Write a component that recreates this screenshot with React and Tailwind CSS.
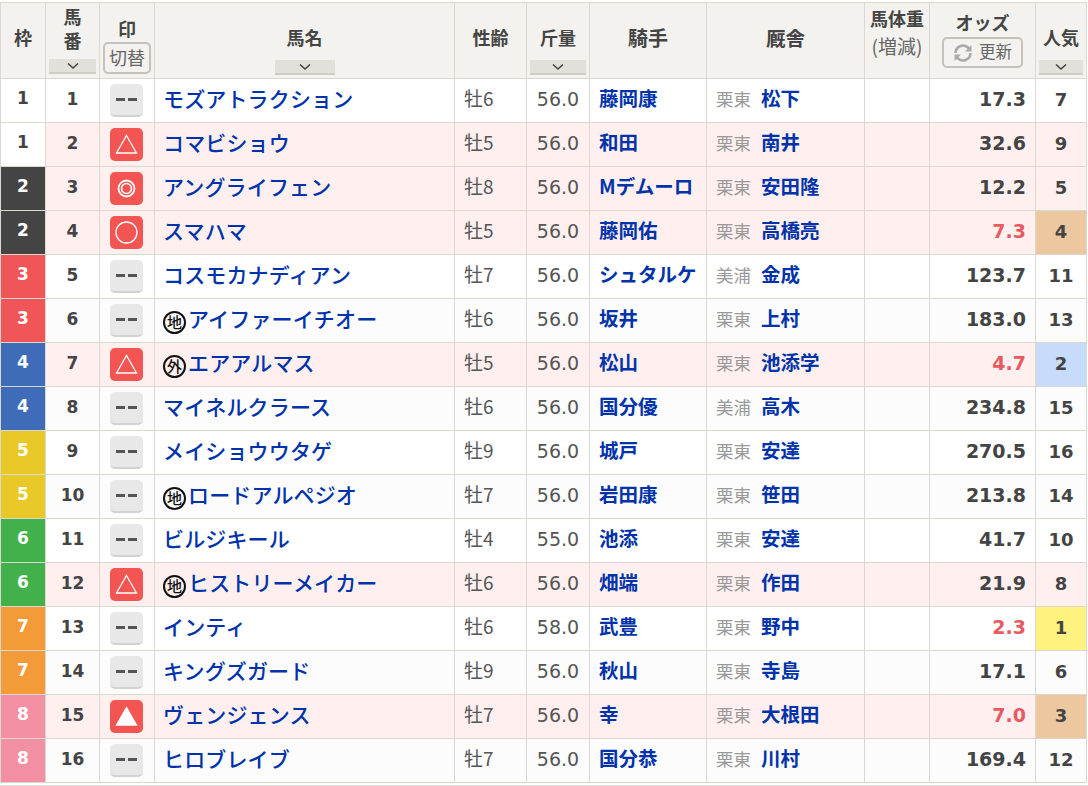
import React from 'react';

const JP = "font-['Noto_Sans_CJK_JP','Liberation_Sans',sans-serif]";
const NUM = "font-['DejaVu_Sans','Noto_Sans_CJK_JP',sans-serif]";

const WAKU = {
  1: 'bg-white text-[#444]',
  2: 'bg-[#444] text-white',
  3: 'bg-[#f05558] text-white',
  4: 'bg-[#3f6cb9] text-white',
  5: 'bg-[#e8c927] text-white',
  6: 'bg-[#43b14b] text-white',
  7: 'bg-[#f29b38] text-white',
  8: 'bg-[#f38fa3] text-white',
};

const horses = [
  { w: 1, n: 1, mark: '', name: 'モズアトラクション', age: '牡6', kg: '56.0', jockey: '藤岡康', area: '栗東', trainer: '松下', odds: '17.3', pop: 7 },
  { w: 1, n: 2, mark: 'tri', name: 'コマビショウ', age: '牡5', kg: '56.0', jockey: '和田', area: '栗東', trainer: '南井', odds: '32.6', pop: 9 },
  { w: 2, n: 3, mark: 'dbl', name: 'アングライフェン', age: '牡8', kg: '56.0', jockey: 'Mデムーロ', area: '栗東', trainer: '安田隆', odds: '12.2', pop: 5 },
  { w: 2, n: 4, mark: 'circle', name: 'スマハマ', age: '牡5', kg: '56.0', jockey: '藤岡佑', area: '栗東', trainer: '高橋亮', odds: '7.3', pop: 4 },
  { w: 3, n: 5, mark: '', name: 'コスモカナディアン', age: '牡7', kg: '56.0', jockey: 'シュタルケ', area: '美浦', trainer: '金成', odds: '123.7', pop: 11 },
  { w: 3, n: 6, mark: '', tag: '地', name: 'アイファーイチオー', age: '牡6', kg: '56.0', jockey: '坂井', area: '栗東', trainer: '上村', odds: '183.0', pop: 13 },
  { w: 4, n: 7, mark: 'tri', tag: '外', name: 'エアアルマス', age: '牡5', kg: '56.0', jockey: '松山', area: '栗東', trainer: '池添学', odds: '4.7', pop: 2 },
  { w: 4, n: 8, mark: '', name: 'マイネルクラース', age: '牡6', kg: '56.0', jockey: '国分優', area: '美浦', trainer: '高木', odds: '234.8', pop: 15 },
  { w: 5, n: 9, mark: '', name: 'メイショウウタゲ', age: '牡9', kg: '56.0', jockey: '城戸', area: '栗東', trainer: '安達', odds: '270.5', pop: 16 },
  { w: 5, n: 10, mark: '', tag: '地', name: 'ロードアルペジオ', age: '牡7', kg: '56.0', jockey: '岩田康', area: '栗東', trainer: '笹田', odds: '213.8', pop: 14 },
  { w: 6, n: 11, mark: '', name: 'ビルジキール', age: '牡4', kg: '55.0', jockey: '池添', area: '栗東', trainer: '安達', odds: '41.7', pop: 10 },
  { w: 6, n: 12, mark: 'tri', tag: '地', name: 'ヒストリーメイカー', age: '牡6', kg: '56.0', jockey: '畑端', area: '栗東', trainer: '作田', odds: '21.9', pop: 8 },
  { w: 7, n: 13, mark: '', name: 'インティ', age: '牡6', kg: '58.0', jockey: '武豊', area: '栗東', trainer: '野中', odds: '2.3', pop: 1 },
  { w: 7, n: 14, mark: '', name: 'キングズガード', age: '牡9', kg: '56.0', jockey: '秋山', area: '栗東', trainer: '寺島', odds: '17.1', pop: 6 },
  { w: 8, n: 15, mark: 'solid', name: 'ヴェンジェンス', age: '牡7', kg: '56.0', jockey: '幸', area: '栗東', trainer: '大根田', odds: '7.0', pop: 3 },
  { w: 8, n: 16, mark: '', name: 'ヒロブレイブ', age: '牡7', kg: '56.0', jockey: '国分恭', area: '栗東', trainer: '川村', odds: '169.4', pop: 12 },
];

const POP_BG = {
  1: 'bg-[#fff27f]',
  2: 'bg-[#c6dcfa]',
  3: 'bg-[#edc79f]',
  4: 'bg-[#edc79f]',
};

function SortTab({ className }) {
  return (
    <div className={`mx-auto h-[15px] bg-[#e2e0da] border-b-2 border-[#cfcdc6] flex items-center justify-center ${className}`}>
      <svg width="12" height="8" viewBox="0 0 12 8" fill="none" stroke="#444" strokeWidth="1.6">
        <path d="M1 1.5 6 6l5-4.5" />
      </svg>
    </div>
  );
}

function Mark({ type }) {
  if (!type) {
    return (
      <div className="ml-[10px] w-[33px] h-[33px] rounded-[5px] bg-[#e8e8e8] border-b-[2px] border-[#d2d2d2] flex items-center justify-center gap-[3px]">
        <span className="w-[9px] h-[3px] bg-[#555]" />
        <span className="w-[9px] h-[3px] bg-[#555]" />
      </div>
    );
  }
  return (
    <div className="ml-[10px] w-[33px] h-[33px] rounded-[5px] bg-[#f25552] flex items-center justify-center">
      <svg width="25" height="25" viewBox="0 0 25 25" fill="none" stroke="#fff" strokeWidth="1.3">
        {type === 'tri' && <path d="M12.5 3.5 22.5 21h-20z" />}
        {type === 'solid' && <path d="M12.5 3.5 22.5 21h-20z" fill="#fff" />}
        {type === 'circle' && <circle cx="12.5" cy="12.5" r="10.5" />}
        {type === 'dbl' && (
          <>
            <circle cx="12.5" cy="12.5" r="8" strokeWidth="1.8" />
            <circle cx="12.5" cy="12.5" r="5" strokeWidth="1.6" />
          </>
        )}
      </svg>
    </div>
  );
}

function Tag({ text }) {
  return (
    <span className="inline-flex items-center justify-center w-[23px] h-[23px] rounded-full border-[2px] border-[#111] pb-[3px] text-[15px] leading-none text-[#111] font-medium mr-[2px] align-[-1px]">
      {text}
    </span>
  );
}

const th = 'border border-[#dbd8d0] bg-[#f3f2ee] text-[#444] text-[18px] font-bold text-center align-top p-0';
const td = 'border border-[#dbd8d0] p-0 align-middle';

export default function App() {
  return (
    <div className={`bg-white pt-[2px] w-[1088px] h-[786px] overflow-hidden ${JP}`}>
      <table className="table-fixed border-collapse w-[1086px]">
        <colgroup>
          <col className="w-[45px]" />
          <col className="w-[54px]" />
          <col className="w-[55px]" />
          <col className="w-[300px]" />
          <col className="w-[72px]" />
          <col className="w-[63px]" />
          <col className="w-[117px]" />
          <col className="w-[158px]" />
          <col className="w-[65px]" />
          <col className="w-[106px]" />
          <col className="w-[51px]" />
        </colgroup>
        <thead>
          <tr className="h-[76px]">
            <th className={th}><div className="pt-[21px] leading-[26px]">枠</div></th>
            <th className={th}>
              <div className="leading-[24px] pt-[1px] pb-[7px]">馬<br />番</div>
              <SortTab className="w-[47px]" />
            </th>
            <th className={th}>
              <div className="pt-[12px] pb-[1px] leading-[26px]">印</div>
              <div className="mx-auto w-[48px] h-[32px] rounded-[5px] border-[2px] border-[#c4c2ba] text-[18px] font-normal leading-[26px] text-[#666]">切替</div>
            </th>
            <th className={th}>
              <div className="pt-[16px] pb-[5px] leading-[36px]">馬名</div>
              <SortTab className="w-[60px]" />
            </th>
            <th className={th}><div className="pt-[21px] leading-[26px]">性齢</div></th>
            <th className={th}>
              <div className="pt-[16px] pb-[5px] leading-[36px]">斤量</div>
              <SortTab className="w-[56px]" />
            </th>
            <th className={`${th} text-[20px]`}><div className="pt-[22px] leading-[26px]">騎手</div></th>
            <th className={`${th} text-[19.5px]`}><div className="pt-[22px] leading-[26px]">厩舎</div></th>
            <th className={th}>
              <div className="pt-[1px] leading-[28px] text-[18px]">馬体重</div>
              <div className="font-normal text-[19px] text-[#666] leading-[28px]">(増減)</div>
            </th>
            <th className={th}>
              <div className="pt-[4px] leading-[30px]">オッズ</div>
              <div className="mx-auto w-[81px] h-[31px] rounded-[5px] border-[2px] border-[#c4c2ba] pb-[3px] text-[16.5px] font-normal text-[#666] flex items-center justify-center gap-[6px]">
                <svg className="mt-[3px]" width="20" height="20" viewBox="0 0 20 20" fill="none" stroke="#aaa" strokeWidth="2.6">
                  <path d="M2.5 10a7.5 7.5 0 0 1 12.5-5.5l2 2" />
                  <path d="M17.5 10a7.5 7.5 0 0 1-12.5 5.5l-2-2" />
                  <path d="M18.5 2v6.5h-6.5z" fill="#aaa" stroke="none" />
                  <path d="M1.5 18v-6.5h6.5z" fill="#aaa" stroke="none" />
                </svg>
                更新
              </div>
            </th>
            <th className={th}>
              <div className="pt-[16px] pb-[5px] leading-[36px]">人気</div>
              <SortTab className="w-[44px]" />
            </th>
          </tr>
        </thead>
        <tbody>
          {horses.map(h => {
            const rowBg = h.mark ? 'bg-[#fff0ef]' : h.n % 2 === 0 ? 'bg-[#fcfcfc]' : 'bg-white';
            const hot = h.pop <= 4;
            return (
              <tr key={h.n} className={`h-[44px] ${rowBg}`}>
                <td className={`${td} ${WAKU[h.w]} ${NUM} text-center text-[17px] font-bold pb-[3px]`}>{h.w}</td>
                <td className={`${td} ${NUM} text-center text-[17px] font-bold text-[#444] pb-[1px]`}>{h.n}</td>
                <td className={td}><Mark type={h.mark} /></td>
                <td className={`${td} pl-[8px] pb-[4px] text-[21px] tracking-[0.15px] font-medium text-[#0033aa] whitespace-nowrap`}>
                  {h.tag && <Tag text={h.tag} />}{h.name}
                </td>
                <td className={`${td} pl-[9px] pb-[5px] text-[19px] text-[#555]`}>{h.age}</td>
                <td className={`${td} text-center pb-[3px] text-[19px] text-[#555] ${NUM}`}>{h.kg}</td>
                <td className={`${td} pl-[9px] pb-[6px] text-[19.5px] font-bold text-[#0033aa] whitespace-nowrap`}>{h.jockey}</td>
                <td className={`${td} pl-[9px] pb-[6px] whitespace-nowrap`}>
                  <span className="text-[17.5px] text-[#999] mr-[10px]">{h.area}</span>
                  <span className="text-[19.5px] font-bold text-[#0033aa]">{h.trainer}</span>
                </td>
                <td className={td} />
                <td className={`${td} ${NUM} pr-[9px] pb-[2px] text-right text-[19px] font-bold ${hot ? 'text-[#e85a62]' : 'text-[#444]'}`}>{h.odds}</td>
                <td className={`${td} ${NUM} ${POP_BG[h.pop] || ''} pb-[2px] text-center text-[18px] font-bold text-[#444]`}>{h.pop}</td>
              </tr>
            );
          })}
        </tbody>
      </table>
      <div className="mt-[2px] h-px bg-[#e4e2dc]" />
    </div>
  );
}
